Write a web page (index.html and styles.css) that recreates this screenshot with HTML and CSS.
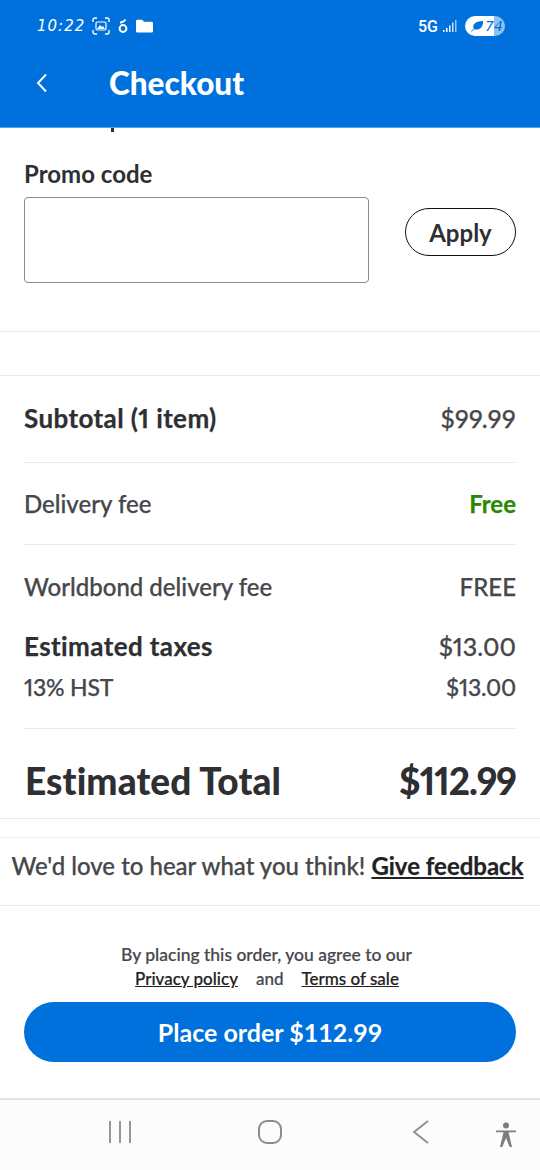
FILE: index.html
```html
<!DOCTYPE html>
<html lang="en">
<head>
<meta charset="utf-8">
<title>Checkout</title>
<link rel="stylesheet" href="styles.css">
</head>
<body>
<div class="app">
  <header class="top">
    <div class="status">
      <div class="status-left">
        <span class="clock">10:22</span>
        <svg class="ic-shot" viewBox="0 0 18 18" width="18" height="18"><path d="M1 5V3a2 2 0 0 1 2-2h2M13 1h2a2 2 0 0 1 2 2v2M17 13v2a2 2 0 0 1-2 2h-2M5 17H3a2 2 0 0 1-2-2v-2" fill="none" stroke="#fff" stroke-width="1.4"/><rect x="4" y="5" width="10" height="8" rx="1.5" fill="none" stroke="#fff" stroke-width="1.2"/><path d="M5 12l3-4 2 2 1-1 2 3z" fill="#fff"/></svg>
        <svg class="ic-six" viewBox="0 0 10 16" width="10" height="16"><circle cx="5" cy="10.5" r="3.4" fill="none" stroke="#fff" stroke-width="2"/><path d="M2 4.500C4 4.500 6 3.500 7.500 1.500" fill="none" stroke="#fff" stroke-width="1.8"/></svg>
        <svg class="ic-folder" viewBox="0 0 18 14" width="17" height="14"><path d="M0 2a1.500 1.500 0 0 1 1.500-1.500h5L8.500 2.500H16.500A1.500 1.500 0 0 1 18 4v8.500A1.500 1.500 0 0 1 16.500 14h-15A1.500 1.500 0 0 1 0 12.500z" fill="#fff"/></svg>
      </div>
      <div class="status-right">
        <span class="net">5G</span>
        <svg class="ic-signal" viewBox="0 0 14 14" width="14" height="14"><g fill="#fff"><rect x="0" y="11" width="1.500" height="2"/><rect x="3" y="9" width="1.500" height="4"/><rect x="6" y="6.500" width="1.500" height="6.500" opacity=".9"/><rect x="9" y="3.500" width="1.500" height="9.500" opacity=".8"/><rect x="12" y="1" width="1.500" height="12" opacity=".6"/></g></svg>
        <div class="battery">
          <svg class="ic-leaf" viewBox="0 0 14 12" width="14" height="12"><path d="M1 11.500C2 10 3 9.300 4 8.800 1.500 5.500 5 1 13 1c.5 6-3.500 9.500-8.500 8.300-1 .5-2 1.200-2.700 2.200z" fill="#0071dc"/></svg>
          <span class="batt-num">74</span>
        </div>
      </div>
    </div>
    <div class="titlebar">
      <svg class="ic-back" viewBox="0 0 12 20" width="12" height="20"><path d="M10 1.500 2 10l8 8.500" fill="none" stroke="#fff" stroke-width="2"/></svg>
      <h1 class="title">Checkout</h1>
    </div>
  </header>

  <main class="content">
    <section class="promo">
      <div class="clipped-mark"></div>
      <div class="promo-label">Promo code</div>
      <div class="promo-row">
        <div class="promo-input"></div>
        <button class="apply">Apply</button>
      </div>
    </section>

    <div class="gap-band"></div>

    <section class="summary">
      <div class="row row-sub">
        <span class="strong">Subtotal (1 item)</span>
        <span class="price">$99.99</span>
      </div>
      <div class="row row-fee">
        <span>Delivery fee</span>
        <span class="free">Free</span>
      </div>
      <div class="tax-block">
        <div class="row row-wb">
          <span>Worldbond delivery fee</span>
          <span>FREE</span>
        </div>
        <div class="row row-tax">
          <span class="strong">Estimated taxes</span>
          <span class="tax-price">$13.00</span>
        </div>
        <div class="row row-hst">
          <span>13% HST</span>
          <span>$13.00</span>
        </div>
      </div>
      <div class="row row-total">
        <span class="total-label">Estimated Total</span>
        <span class="total-amount">$112.99</span>
      </div>
    </section>

    <div class="feedback">We'd love to hear what you think! <a class="fb-link">Give feedback</a></div>

    <section class="place">
      <p class="legal">By placing this order, you agree to our</p>
      <p class="legal-links"><a>Privacy policy</a><span>and</span><a>Terms of sale</a></p>
      <button class="cta">Place order $112.99</button>
    </section>
  </main>

  <nav class="navbar">
    <svg class="nav-recent" viewBox="0 0 24 24" width="24" height="24"><path d="M2 1v22M12 1v22M22 1v22" fill="none" stroke="#8c8c8c" stroke-width="1.800"/></svg>
    <svg class="nav-home" viewBox="0 0 26 26" width="26" height="26"><rect x="2" y="2" width="22" height="22" rx="8" fill="none" stroke="#8c8c8c" stroke-width="2"/></svg>
    <svg class="nav-back" viewBox="0 0 18 26" width="18" height="26"><path d="M16 2 2 13l14 11" fill="none" stroke="#8c8c8c" stroke-width="1.800"/></svg>
    <svg class="nav-a11y" viewBox="0 0 22 26" width="22" height="26"><circle cx="11" cy="3.500" r="3" fill="#7d7d7d"/><path d="M1 8.500h20v1.800h-7.500L17 25h-2.300L11 16 7.300 25H5l3.500-14.700H1z" fill="#7d7d7d"/></svg>
  </nav>
</div>
</body>
</html>
```

FILE: styles.css
```css
* { box-sizing: border-box; }
html, body { margin: 0; padding: 0; }
body { font-family: Lato, "Noto Sans", sans-serif; font-variant-numeric: proportional-nums; color: #2e2f32; background: #fff; }
p, h1 { margin: 0; }
.app { width: 540px; height: 1170px; display: flex; flex-direction: column; overflow: hidden; }

.top { background: #0071dc; height: 128px; border-bottom: 1px solid #4da3ec; color: #fff; flex: none; }
.status { height: 46px; padding: 6px 35px 0 37px; display: flex; justify-content: space-between; align-items: center; }
.status-left { display: flex; align-items: center; gap: 8px; }
.clock { font-family: "DejaVu Sans", sans-serif; font-style: italic; font-size: 15px; letter-spacing: 1px; width: 47px; }
.status-right { display: flex; align-items: center; gap: 1px; }
.net { font-family: Roboto, sans-serif; font-weight: 500; font-size: 16px; margin-right: 4px; }
.battery { width: 40px; height: 20px; border-radius: 10px; background: linear-gradient(90deg, #fff 0 72%, #8fc2f0 72%); display: flex; align-items: center; padding-left: 5px; gap: 1px; margin-left: 7px; }
.batt-num { color: #0071dc; font-family: "DejaVu Sans", sans-serif; font-style: italic; font-size: 14px; }
.titlebar { height: 73px; display: flex; align-items: center; padding: 2px 0 0 36px; }
.ic-back { flex: none; margin-top: -2px; }
.title { font-size: 31.500px; font-weight: 900; margin-left: 61px; line-height: 1; }

.content { flex: 1; display: flex; flex-direction: column; min-height: 0; }
.promo { height: 204px; padding: 0 24px; border-bottom: 1px solid #e9e9e9; }
.clipped-mark { width: 3px; height: 4px; margin-left: 87px; background: #2e2f32; }
.promo-label { font-size: 24px; font-weight: 700; line-height: 28px; margin-top: 28px; }
.promo-row { display: flex; align-items: flex-start; justify-content: space-between; margin-top: 9px; }
.promo-input { width: 345px; height: 86px; border: 1.500px solid #8a8a8a; border-radius: 4px; }
.apply { width: 111px; height: 48px; margin-top: 11px; border: 1.500px solid #111; border-radius: 24px; background: #fff; font: 700 24px Lato, sans-serif; color: #2e2f32; padding: 0; }
.gap-band { height: 44px; border-bottom: 1px solid #e9e9e9; }

.summary { padding: 0 24px; }
.row { display: flex; justify-content: space-between; align-items: center; font-size: 24px; font-weight: 500; color: #46474a; -webkit-text-stroke: .25px currentColor; }
.strong { font-weight: 700; font-size: 26px; letter-spacing: .4px; color: #2e2f32; }
.price { font-size: 25px; letter-spacing: .4px; }
.tax-price { font-size: 25px; }
.row-sub { height: 87px; padding-bottom: 2px; border-bottom: 1px solid #e9e9e9; }
.row-fee { height: 82px; border-bottom: 1px solid #e9e9e9; }
.free { color: #2a8703; font-weight: 700; }
.tax-block { height: 184px; padding-top: 23px; border-bottom: 1px solid #e9e9e9; }
.row-wb { height: 36px; }
.row-tax { height: 36px; margin-top: 24px; }
.row-hst { height: 32px; margin-top: 7px; font-size: 23px; letter-spacing: -.2px; }
.row-total { height: 89px; padding-top: 13px; font-size: 37px; font-weight: 900; color: #2e2f32; -webkit-text-stroke: 0; }
.total-label { letter-spacing: .1px; margin-left: 1px; }
.total-amount { letter-spacing: -1px; }

.feedback { height: 88px; border-bottom: 1px solid #e9e9e9; background: linear-gradient(#e9e9e9 0 1px, #fff 1px 19px, #eee 19px 20px, #fff 20px); padding: 19px 5px 0 0; text-align: center; font-size: 24px; font-weight: 500; line-height: 57px; white-space: nowrap; color: #46474a; -webkit-text-stroke: .25px currentColor; }
.fb-link { color: #222; font-weight: 700; text-decoration: underline; }

.place { padding: 37px 24px 0; text-align: center; }
.legal { font-size: 17.500px; font-weight: 500; line-height: 24px; color: #46474a; margin-left: -7px; -webkit-text-stroke: .2px currentColor; }
.legal-links { display: flex; justify-content: center; gap: 18px; font-size: 17px; line-height: 24px; color: #46474a; font-weight: 500; margin-left: -6px; -webkit-text-stroke: .2px currentColor; }
.legal-links a { color: #222; text-decoration: underline; }
.cta { display: block; width: 100%; height: 60px; margin-top: 11px; border: 0; border-radius: 30px; background: #0071dc; color: #fff; font: 700 25px Lato, sans-serif; padding: 0; }

.navbar { height: 72px; flex: none; background: #fcfcfc; border-top: 2px solid #e4e4e4; display: flex; align-items: center; padding: 0 0 6px 108px; }
.nav-home { margin-left: 125px; }
.nav-back { margin-left: 129px; }
.nav-a11y { margin-left: 65px; margin-top: 5px; }
```
